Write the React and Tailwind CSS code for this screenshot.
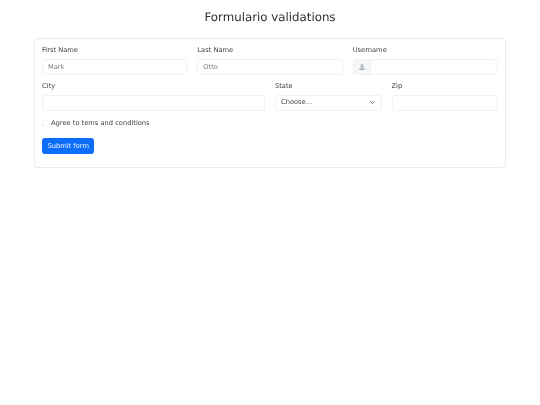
import React from "react";

const label = "block text-[6.700px] leading-[10.500px] text-[#3a3f44] mb-[3px] translate-y-[0.250px]";
const input = "block w-full h-[16px] rounded-[3px] border border-[#f1f2f4] bg-white px-[5px] text-[6.700px] leading-[10.500px] text-[#3a3f44] placeholder:text-[#7a828a] outline-none";

function Field({ span, name, children }) {
  return (
    <div className={span}>
      <label className={label}>{name}</label>
      {children}
    </div>
  );
}

export default function App() {
  return (
    <div className="min-h-[405px] bg-white font-['DejaVu_Sans',sans-serif] text-[#3a3f44] [text-rendering:geometricPrecision] [will-change:transform]">
      <div className="px-[34px] pt-[9px]">
        <h1 className="text-center text-[11.800px] leading-[16px] font-normal mb-[13px] text-[#2b3035]">Formulario validations</h1>
        <form className="border border-[#e9ebed] rounded-[3px] px-[7px] pt-[6px] pb-[13px]">
          <div className="grid grid-cols-12 gap-x-[10px] gap-y-[6.500px]">
            <Field span="col-span-4" name="First Name">
              <input className={input} placeholder="Mark" defaultValue="" />
            </Field>
            <Field span="col-span-4" name="Last Name">
              <input className={input} placeholder="Otto" defaultValue="" />
            </Field>
            <Field span="col-span-4" name="Username">
              <div className="flex h-[16px]">
                <span className="flex w-[18px] items-center justify-center rounded-l-[3px] border border-[#f1f2f4] bg-[#f6f7f8]">
                  <svg width="6" height="6" viewBox="0 0 16 16" fill="none" stroke="#6a7077" strokeWidth="1.600">
                    <circle cx="8" cy="4.500" r="3" />
                    <path d="M2 14.500h12c0-3-2.500-4.500-6-4.500s-6 1.500-6 4.500z" />
                  </svg>
                </span>
                <input className={input + " -ml-px rounded-l-none min-w-0 flex-1"} />
              </div>
            </Field>
            <Field span="col-span-6" name="City">
              <input className={input} />
            </Field>
            <Field span="col-span-3" name="State">
              <div className="flex h-[16px] items-center justify-between rounded-[3px] border border-[#f1f2f4] bg-white pl-[5px] pr-[6px] text-[6.700px] leading-[10.500px]">
                <span>Choose...</span>
                <svg width="5" height="5" viewBox="0 0 16 16" fill="none" stroke="#343a40" strokeWidth="2.400" strokeLinecap="round" strokeLinejoin="round">
                  <path d="M2 5l6 6 6-6" />
                </svg>
              </div>
            </Field>
            <Field span="col-span-3" name="Zip">
              <input className={input} />
            </Field>
          </div>
          <div className="mt-[6.500px] flex items-center gap-[2px] h-[12px]">
            <span className="w-[7px] h-[7px] rounded-[2px] border border-[#f3f4f5] bg-white" />
            <span className="text-[6.700px] leading-[10.500px]">Agree to tems and conditions</span>
          </div>
          <button type="button" className="mt-[9px] block h-[16px] rounded-[3px] bg-[#0d6efd] px-[5.500px] text-[6.700px] leading-[10.500px] text-[#f2f7ff]">
            Submit form
          </button>
        </form>
      </div>
    </div>
  );
}
